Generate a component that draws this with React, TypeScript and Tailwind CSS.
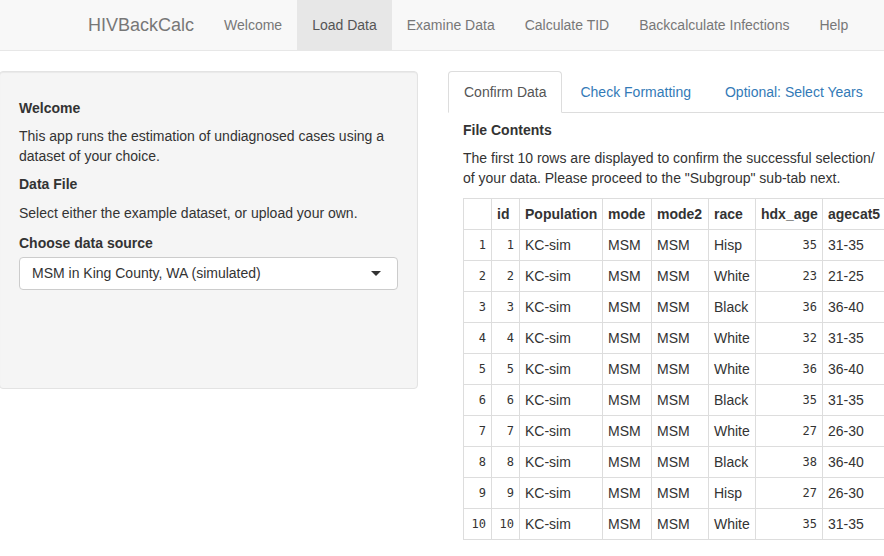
import React from 'react';

const navItems = ['Welcome', 'Load Data', 'Examine Data', 'Calculate TID', 'Backcalculate Infections', 'Help'];

const rows: [number, string, number, string][] = [
  [1, 'Hisp', 35, '31-35'],
  [2, 'White', 23, '21-25'],
  [3, 'Black', 36, '36-40'],
  [4, 'White', 32, '31-35'],
  [5, 'White', 36, '36-40'],
  [6, 'Black', 35, '31-35'],
  [7, 'White', 27, '26-30'],
  [8, 'Black', 38, '36-40'],
  [9, 'Hisp', 27, '26-30'],
  [10, 'White', 35, '31-35'],
];

const cell = 'border border-[#ddd] px-[5px] py-[5px] leading-[20px]';
const num = 'text-right font-["DejaVu_Sans_Mono",monospace] text-[12px]';

const App: React.FC = () => {
  return (
    <div className="w-[884px] h-[556px] overflow-hidden bg-white text-[#333] text-[14px] leading-[20px] font-['Liberation_Sans',Arial,sans-serif]">
      {/* navbar */}
      <nav className="h-[51px] bg-[#f8f8f8] border-b border-[#e7e7e7] flex pl-[73px]">
        <a className="px-[15px] py-[15px] text-[18px] leading-[20px] text-[#777]">HIVBackCalc</a>
        <ul className="flex">
          {navItems.map((item) => (
            <li key={item}>
              <a
                className={
                  item === 'Load Data'
                    ? 'block px-[15px] py-[15px] bg-[#e7e7e7] text-[#555]'
                    : 'block px-[15px] py-[15px] text-[#777]'
                }
              >
                {item}
              </a>
            </li>
          ))}
        </ul>
      </nav>

      <div className="flex mt-5">
        {/* sidebar */}
        <div className="w-[447px] shrink-0">
          <div className="-ml-px w-[419px] h-[318px] bg-[#f5f5f5] border border-[#e3e3e3] rounded-[4px] p-[19px] shadow-[inset_0_1px_1px_rgba(0,0,0,0.05)]">
            <h5 className="mt-[10px] mb-[10px] font-bold leading-[1.1]">Welcome</h5>
            <p className="mb-[10px]">This app runs the estimation of undiagnosed cases using a dataset of your choice.</p>
            <h5 className="mt-[11px] mb-[10px] font-bold leading-[1.1]">Data File</h5>
            <p className="mb-[10px]">Select either the example dataset, or upload your own.</p>
            <label className="inline-block font-bold mb-[4px]">Choose data source</label>
            <div className="h-[33px] bg-white border border-[#ccc] rounded-[4px] flex items-center justify-between px-[12px]">
              <span>MSM in King County, WA (simulated)</span>
              <span className="w-0 h-0 mr-[4px] border-l-[5px] border-r-[5px] border-t-[5px] border-l-transparent border-r-transparent border-t-[#333]" />
            </div>
          </div>
        </div>

        {/* main */}
        <div className="flex-1 min-w-0 overflow-hidden">
          <div className="w-[900px]">
            <ul className="flex ml-px border-b border-[#ddd]">
              <li className="-mb-px mr-[2px]">
                <a className="block px-[15px] py-[10px] bg-white border border-[#ddd] border-b-transparent rounded-t-[4px] text-[#555]">
                  Confirm Data
                </a>
              </li>
              <li className="-mb-px mr-[2px]">
                <a className="block px-[15px] py-[10px] border border-transparent text-[#337ab7]">Check Formatting</a>
              </li>
              <li className="-mb-px mr-[2px]">
                <a className="block px-[15px] py-[10px] border border-transparent text-[#337ab7]">Optional: Select Years</a>
              </li>
            </ul>

            <div className="pl-4">
              <h5 className="mt-[10px] mb-[10px] font-bold leading-[1.1]">File Contents</h5>
              <p className="mb-[10px] whitespace-nowrap">
                The first 10 rows are displayed to confirm the successful selection/
                <br />
                of your data. Please proceed to the "Subgroup" sub-tab next.
              </p>
              <table className="table-fixed border-collapse w-[439px]">
                <thead>
                  <tr>
                    <th className={`${cell} w-[28px]`}></th>
                    <th className={`${cell} w-[28px] text-left`}>id</th>
                    <th className={`${cell} w-[83px] text-left`}>Population</th>
                    <th className={`${cell} w-[49px] text-left`}>mode</th>
                    <th className={`${cell} w-[57px] text-left`}>mode2</th>
                    <th className={`${cell} w-[47px] text-left`}>race</th>
                    <th className={`${cell} w-[67px] text-left`}>hdx_age</th>
                    <th className={`${cell} w-[80px] text-left`}>agecat5</th>
                  </tr>
                </thead>
                <tbody>
                  {rows.map(([id, race, age, cat]) => (
                    <tr key={id}>
                      <td className={`${cell} ${num}`}>{id}</td>
                      <td className={`${cell} ${num}`}>{id}</td>
                      <td className={cell}>KC-sim</td>
                      <td className={cell}>MSM</td>
                      <td className={cell}>MSM</td>
                      <td className={cell}>{race}</td>
                      <td className={`${cell} ${num}`}>{age}</td>
                      <td className={cell}>{cat}</td>
                    </tr>
                  ))}
                </tbody>
              </table>
            </div>
          </div>
        </div>
      </div>
    </div>
  );
};

export default App;
